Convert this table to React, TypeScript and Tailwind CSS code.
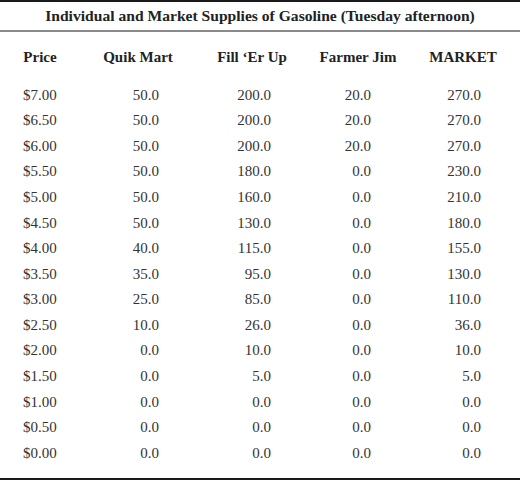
import React from "react";

const rows: [string, string, string, string, string][] = [
  ["$7.00", "50.0", "200.0", "20.0", "270.0"],
  ["$6.50", "50.0", "200.0", "20.0", "270.0"],
  ["$6.00", "50.0", "200.0", "20.0", "270.0"],
  ["$5.50", "50.0", "180.0", "0.0", "230.0"],
  ["$5.00", "50.0", "160.0", "0.0", "210.0"],
  ["$4.50", "50.0", "130.0", "0.0", "180.0"],
  ["$4.00", "40.0", "115.0", "0.0", "155.0"],
  ["$3.50", "35.0", "95.0", "0.0", "130.0"],
  ["$3.00", "25.0", "85.0", "0.0", "110.0"],
  ["$2.50", "10.0", "26.0", "0.0", "36.0"],
  ["$2.00", "0.0", "10.0", "0.0", "10.0"],
  ["$1.50", "0.0", "5.0", "0.0", "5.0"],
  ["$1.00", "0.0", "0.0", "0.0", "0.0"],
  ["$0.50", "0.0", "0.0", "0.0", "0.0"],
  ["$0.00", "0.0", "0.0", "0.0", "0.0"],
];

export default function App() {
  return (
    <div
      className="w-[520px] h-[480px] bg-white flex flex-col text-[#2a2a2a]"
      style={{ fontFamily: '"Liberation Serif", "DejaVu Serif", serif' }}
    >
      <div className="h-[2px] bg-[#1a1a1a]" />
      <div className="h-[28px] flex items-center justify-center font-bold text-[15.6px] text-[#222]">
        Individual and Market Supplies of Gasoline (Tuesday afternoon)
      </div>
      <div className="h-[2px] bg-[#8a8a8a]" />
      <div className="h-[50px] flex items-center font-bold text-[15px] text-[#222]">
        <div className="w-[80px] text-center">Price</div>
        <div className="w-[116px] text-center">Quik Mart</div>
        <div className="w-[112px] text-center">Fill ‘Er Up</div>
        <div className="w-[100px] text-center">Farmer Jim</div>
        <div className="w-[110px] text-center">MARKET</div>
      </div>
      <div className="flex flex-col text-[15px] text-[#333]">
        {rows.map((r) => (
          <div key={r[0]} className="h-[25.6px] flex items-center">
            <div className="w-[100px] pl-[23px]">{r[0]}</div>
            <div className="w-[59px] text-right">{r[1]}</div>
            <div className="w-[112px] text-right">{r[2]}</div>
            <div className="w-[100px] text-right">{r[3]}</div>
            <div className="w-[110px] text-right">{r[4]}</div>
          </div>
        ))}
      </div>
      <div className="flex-1" />
      <div className="h-[2px] bg-[#1a1a1a]" />
    </div>
  );
}
